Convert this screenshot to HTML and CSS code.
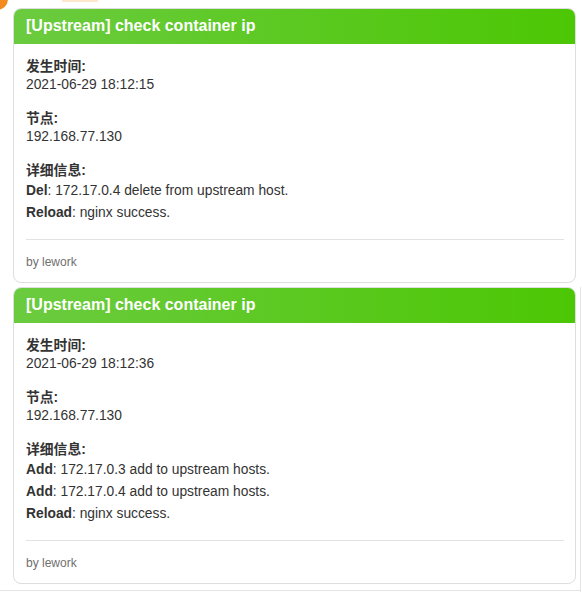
FILE: index.html
```html
<!DOCTYPE html>
<html lang="zh-CN">
<head>
<meta charset="utf-8">
<title>Upstream alerts</title>
<link rel="stylesheet" href="styles.css">
</head>
<body>
<div class="deco-avatar"></div>
<div class="deco-tab"></div>
<div class="feed">
  <div class="card">
    <div class="card-header">[Upstream] check container ip</div>
    <div class="card-body">
      <div class="field">
        <div class="label">发生时间:</div>
        <div class="value">2021-06-29 18:12:15</div>
      </div>
      <div class="field">
        <div class="label">节点:</div>
        <div class="value">192.168.77.130</div>
      </div>
      <div class="field">
        <div class="label">详细信息:</div>
        <div class="detail"><b>Del</b>: 172.17.0.4 delete from upstream host.</div>
        <div class="detail"><b>Reload</b>: nginx success.</div>
      </div>
    </div>
    <div class="card-footer">by lework</div>
  </div>
  <div class="card">
    <div class="card-header">[Upstream] check container ip</div>
    <div class="card-body">
      <div class="field">
        <div class="label">发生时间:</div>
        <div class="value">2021-06-29 18:12:36</div>
      </div>
      <div class="field">
        <div class="label">节点:</div>
        <div class="value">192.168.77.130</div>
      </div>
      <div class="field">
        <div class="label">详细信息:</div>
        <div class="detail"><b>Add</b>: 172.17.0.3 add to upstream hosts.</div>
        <div class="detail"><b>Add</b>: 172.17.0.4 add to upstream hosts.</div>
        <div class="detail"><b>Reload</b>: nginx success.</div>
      </div>
    </div>
    <div class="card-footer">by lework</div>
  </div>
</div>
<div class="edge-right"></div>
<div class="edge-bottom"></div>
</body>
</html>
```

FILE: styles.css
```css
html, body {
  margin: 0;
  padding: 0;
  background: #ffffff;
}
body {
  position: relative;
  width: 582px;
  height: 592px;
  overflow: hidden;
  font-family: "Liberation Sans", Arial, "Noto Sans CJK SC", sans-serif;
  color: #333333;
}
.deco-avatar {
  position: absolute;
  left: -14px;
  top: -12px;
  width: 22px;
  height: 22px;
  border-radius: 50%;
  background: #f28a1e;
}
.deco-tab {
  position: absolute;
  left: 62px;
  top: 0;
  width: 36px;
  height: 2px;
  background: #fde7cb;
}
.edge-right {
  position: absolute;
  left: 580px;
  top: 287px;
  width: 1px;
  height: 305px;
  background: #e4e4e4;
}
.edge-bottom {
  position: absolute;
  left: 0;
  top: 590px;
  width: 580px;
  height: 1px;
  background: #e4e4e4;
}
.feed {
  display: flex;
  flex-direction: column;
  gap: 4px;
  padding: 8px 0 0 13px;
}
.card {
  width: 561px;
  border: 1px solid #dedede;
  border-radius: 8px;
  background: #ffffff;
  overflow: hidden;
}
.card-header {
  height: 35px;
  line-height: 34px;
  padding: 0 12px;
  background: linear-gradient(90deg, #6bcb3f 0%, #4cc704 100%);
  color: #ffffff;
  font-weight: bold;
  font-size: 16px;
}
.card-body {
  padding: 14px 12px 15px;
  font-size: 13.8px;
  line-height: 18px;
  display: flex;
  flex-direction: column;
  gap: 16px;
}
.label {
  font-weight: bold;
  font-family: "Liberation Sans", "Noto Sans CJK SC", sans-serif;
}
.value {
  color: #333333;
}
.detail {
  line-height: 22px;
}
.detail b {
  font-weight: bold;
}
.card-footer {
  margin: 0 11px 0 12px;
  border-top: 1px solid #e2e2e2;
  padding: 14px 0 12px;
  font-size: 12px;
  line-height: 16px;
  color: #6f6f6f;
}
```
